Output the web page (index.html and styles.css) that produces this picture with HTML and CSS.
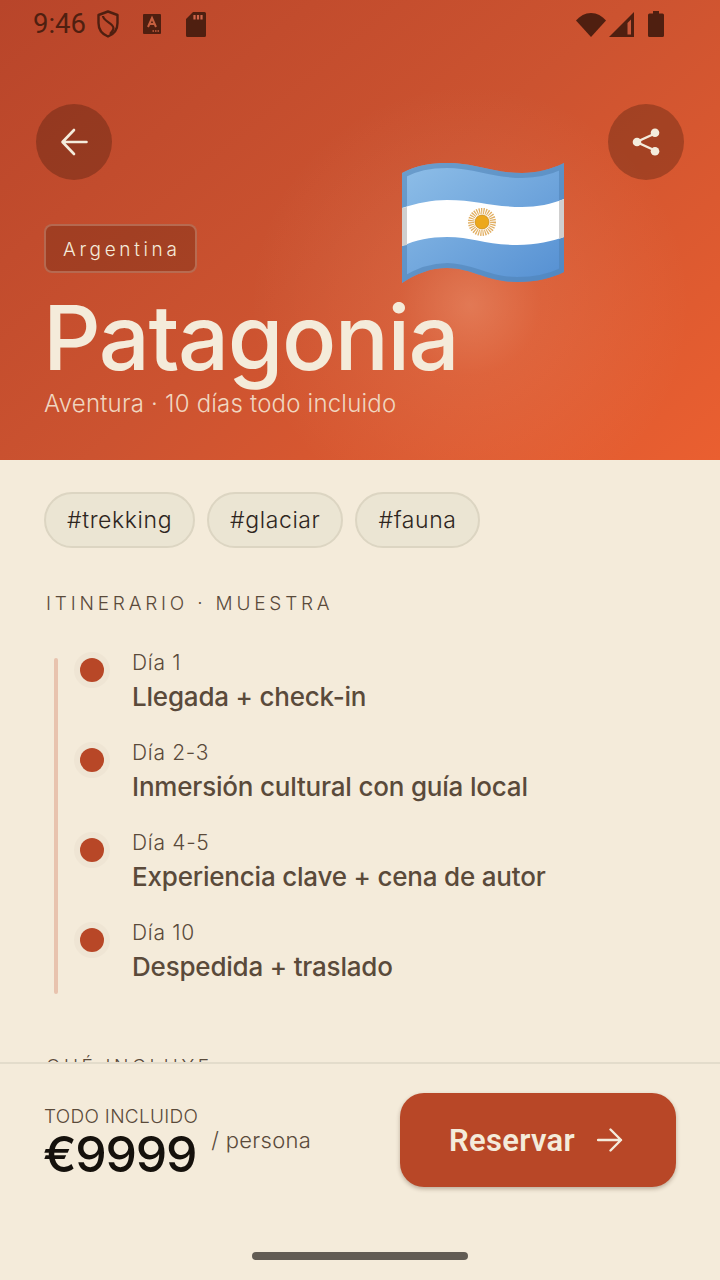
FILE: index.html
```html
<!DOCTYPE html>
<html lang="es">
<head>
    <meta charset="UTF-8">
    <meta name="viewport" content="width=device-width, initial-scale=1.0">
    <title>Patagonia</title>
    <link rel="stylesheet" href="styles.css">
</head>
<body>
    <div class="screen">
        <header class="hero">
            <!-- Barra de estado -->
            <div class="status-bar">
                <div class="status-left">
                    <span class="time">9:46</span>
                    <svg class="ic-shield" viewBox="0 0 22 28" width="22" height="28">
                        <path d="M11 1.500 20.500 5V13C20.500 20 16 24.500 11 26.500 6 24.500 1.500 20 1.500 13V5Z" fill="none" stroke="#4f1f10" stroke-width="2.400" stroke-linejoin="round"/>
                        <path d="M6 6C6 11 16 13 16.500 18 16.500 20 15 22 13 24" fill="none" stroke="#4f1f10" stroke-width="2.200"/>
                    </svg>
                    <svg class="ic-a" viewBox="0 0 18 20" width="18" height="20">
                        <rect width="18" height="20" rx="1" fill="#4f1f10"/>
                        <path d="M5 13 9 4 13 13M6.500 10H11.500" fill="none" stroke="#c65f3f" stroke-width="2"/>
                        <path d="M9.500 17H11M12 17H13.500M14.500 17H16" stroke="#c65f3f" stroke-width="1.600"/>
                    </svg>
                    <svg class="ic-sd" viewBox="0 0 20 25" width="20" height="25">
                        <path d="M7 0H18.500A1.500 1.500 0 0 1 20 1.500V23.500A1.500 1.500 0 0 1 18.500 25H1.500A1.500 1.500 0 0 1 0 23.500V7Z" fill="#4f1f10"/>
                        <path d="M8.500 3V7.500M12 3V7.500M15.500 3V7.500" stroke="#d0654a" stroke-width="2.200"/>
                    </svg>
                </div>
                <div class="status-right">
                    <svg viewBox="0 0 30 25" width="30" height="25">
                        <path d="M0 8.500C4 4 9 1 15 1S26 4 30 8.500L15 25Z" fill="#4f1f10"/>
                    </svg>
                    <svg class="ic-signal" viewBox="0 0 25 25" width="25" height="25">
                        <path d="M25 0V25H0Z" fill="#4f1f10"/>
                        <path d="M18.500 11V22.500H22V7.500Z" fill="#c9583a"/>
                    </svg>
                    <svg class="ic-battery" viewBox="0 0 16 26" width="16" height="26">
                        <path d="M5 0H11V2.500H14.500A1.500 1.500 0 0 1 16 4V24.500A1.500 1.500 0 0 1 14.500 26H1.500A1.500 1.500 0 0 1 0 24.500V4A1.500 1.500 0 0 1 1.500 2.500H5Z" fill="#4f1f10"/>
                    </svg>
                </div>
            </div>

            <nav class="hero-nav">
                <button class="round-btn btn-back">
                    <svg viewBox="0 0 28 28" width="28" height="28">
                        <path d="M26.500 14H3M14 2 2.500 14 14 26" fill="none" stroke="#f4ecdc" stroke-width="2.600" stroke-linecap="round" stroke-linejoin="round"/>
                    </svg>
                </button>
                <button class="round-btn btn-share">
                    <svg viewBox="0 0 30 30" width="30" height="30">
                        <path d="M24 6.500 5.500 15 24 23.500" fill="none" stroke="#f4ecdc" stroke-width="2.400"/>
                        <circle cx="24" cy="5.700" r="4.300" fill="#f4ecdc"/>
                        <circle cx="6" cy="15" r="4.300" fill="#f4ecdc"/>
                        <circle cx="24" cy="24.300" r="4.300" fill="#f4ecdc"/>
                    </svg>
                </button>
            </nav>

            <svg class="flag" viewBox="0 0 162 122" width="162" height="122">
                <defs>
                    <linearGradient id="flagBlue" x1="0" y1="0" x2="1" y2="1">
                        <stop offset="0" stop-color="#8fbfe8"/>
                        <stop offset="1" stop-color="#548fd2"/>
                    </linearGradient>
                    <clipPath id="flagShape">
                        <path d="M0 11C15 3 30 1 45 1 75 1 90 11 120 11 135 11 150 7 162 1V110C150 116 135 120 115 120 85 120 70 106 45 106 28 106 14 112 0 121Z"/>
                    </clipPath>
                </defs>
                <g clip-path="url(#flagShape)">
                    <rect width="162" height="122" fill="url(#flagBlue)"/>
                    <path d="M0 11C15 3 30 1 45 1 75 1 90 11 120 11 135 11 150 7 162 1V110C150 116 135 120 115 120 85 120 70 106 45 106 28 106 14 112 0 121Z" fill="none" stroke="#4f82b4" stroke-opacity=".55" stroke-width="10"/>
                    <path d="M0 46C15 41 30 38 45 38 75 38 90 45 120 45 135 45 150 42 162 37V75C150 79 135 83 115 83 85 83 70 75 45 75 28 75 14 78 0 84Z" fill="#fff"/>
                    <path d="M0 46 5 45V83L0 84ZM157 39 162 37V75L157 77Z" fill="#cfcfcf"/>
                </g>
                <circle cx="80" cy="60" r="11" fill="none" stroke="#d99a3a" stroke-opacity=".8" stroke-width="6" stroke-dasharray="1.200 1"/>
                <circle cx="80" cy="60" r="7" fill="#eca81c" stroke="#c98a18" stroke-width=".8"/>
            </svg>

            <div class="hero-text">
                <span class="country">Argentina</span>
                <h1>Patagonia</h1>
                <p class="hero-sub">Aventura · 10 días todo incluido</p>
            </div>
        </header>

        <main class="content">
            <div class="tags">
                <span class="tag">#trekking</span>
                <span class="tag">#glaciar</span>
                <span class="tag">#fauna</span>
            </div>

            <h2 class="section-title">ITINERARIO · MUESTRA</h2>

            <ul class="timeline">
                <li class="stop">
                    <span class="dot"></span>
                    <div>
                        <div class="stop-day">Día 1</div>
                        <div class="stop-name">Llegada + check-in</div>
                    </div>
                </li>
                <li class="stop">
                    <span class="dot"></span>
                    <div>
                        <div class="stop-day">Día 2-3</div>
                        <div class="stop-name">Inmersión cultural con guía local</div>
                    </div>
                </li>
                <li class="stop">
                    <span class="dot"></span>
                    <div>
                        <div class="stop-day">Día 4-5</div>
                        <div class="stop-name">Experiencia clave + cena de autor</div>
                    </div>
                </li>
                <li class="stop">
                    <span class="dot"></span>
                    <div>
                        <div class="stop-day">Día 10</div>
                        <div class="stop-name">Despedida + traslado</div>
                    </div>
                </li>
            </ul>

            <h2 class="section-title next-title">QUÉ INCLUYE</h2>
        </main>

        <footer class="bottom-bar">
            <div class="price-row">
                <div class="price-box">
                    <div class="price-label">TODO INCLUIDO</div>
                    <div class="price">€9999</div>
                </div>
                <span class="per">/ persona</span>
                <button class="book-btn">
                    Reservar
                    <svg viewBox="0 0 26 26" width="26" height="26">
                        <path d="M1 13H24M13.500 2.500 24 13 13.500 23.500" fill="none" stroke="#f4ecdc" stroke-width="2.400" stroke-linecap="round" stroke-linejoin="round"/>
                    </svg>
                </button>
            </div>
            <div class="handle"></div>
        </footer>
    </div>
</body>
</html>
```

FILE: styles.css
```css
html {
    box-sizing: border-box;
}
*, *:before, *:after {
    box-sizing: inherit;
}
body {
    margin: 0;
    font-family: 'Inter', 'Liberation Sans', sans-serif;
    background-color: #F4EBDA;
    color: #5A4A3A;
}

.screen {
    width: 720px;
    height: 1280px;
    display: flex;
    flex-direction: column;
    overflow: hidden;
}

/* Cabecera */
.hero {
    position: relative;
    height: 460px;
    flex: none;
    background-image:
        radial-gradient(circle at 470px 305px, rgba(255, 200, 170, 0.3) 0, rgba(255, 200, 170, 0.1) 70px, transparent 220px),
        linear-gradient(140deg, #B8452A 0%, #CC5330 50%, #EA5F30 100%);
}

.status-bar {
    height: 48px;
    padding: 10px 56px 0 33px;
    display: flex;
    justify-content: space-between;
    align-items: flex-start;
}
.status-left, .status-right {
    display: flex;
    align-items: center;
}
.status-right {
    padding-top: 1px;
}
.time {
    font-family: 'Roboto', sans-serif;
    font-size: 27.500px;
    line-height: 28px;
    color: #4F1F10;
}
.ic-shield {
    margin-left: 11px;
}
.ic-a {
    margin-left: 24px;
}
.ic-sd {
    margin-left: 25px;
}
.ic-signal {
    margin-left: 3px;
}
.ic-battery {
    margin-left: 14px;
}

.hero-nav {
    display: flex;
    justify-content: space-between;
    padding: 56px 36px 0;
}
.round-btn {
    width: 76px;
    height: 76px;
    border: none;
    border-radius: 50%;
    padding: 0;
    display: flex;
    align-items: center;
    justify-content: center;
    background-color: rgba(40, 15, 5, 0.28);
}

.flag {
    position: absolute;
    left: 402px;
    top: 162px;
}

.hero-text {
    padding: 44px 44px 0;
}
.country {
    display: inline-block;
    height: 49px;
    line-height: 47px;
    padding: 0 14px 0 17px;
    font-size: 19px;
    letter-spacing: 3.650px;
    font-weight: 300;
    color: #F4EBDA;
    background-color: rgba(60, 20, 5, 0.25);
    border: 2px solid rgba(244, 235, 218, 0.25);
    border-radius: 8px;
}
h1 {
    margin: 11px 0 0 -1px;
    font-size: 90px;
    line-height: 108px;
    font-weight: 500;
    letter-spacing: -1.500px;
    color: #F4EBDA;
}
.hero-sub {
    margin: -3px 0 0;
    font-size: 24px;
    line-height: 30px;
    font-weight: 300;
    letter-spacing: 0.200px;
    color: #F0D6C0;
}

/* Contenido */
.content {
    flex: 1;
    min-height: 0;
    overflow: hidden;
    padding: 32px 44px 0;
}
.tags {
    display: flex;
    gap: 12px;
}
.tag {
    height: 56px;
    line-height: 52px;
    padding: 0 21px;
    font-size: 23px;
    font-weight: 300;
    letter-spacing: 0.600px;
    color: #2E261E;
    background-color: #EBE5D3;
    border: 2px solid #DCD5C2;
    border-radius: 28px;
}
.section-title {
    margin: 44px 0 0 2px;
    font-size: 19px;
    line-height: 24px;
    font-weight: 300;
    letter-spacing: 3.800px;
    color: #5A4A3A;
}
.next-title {
    margin-top: 61px;
    letter-spacing: 3.600px;
}

.timeline {
    list-style: none;
    margin: 18px 0 0;
    padding: 0 0 0 24px;
    position: relative;
}
.timeline:before {
    content: '';
    position: absolute;
    left: 10px;
    top: 24px;
    bottom: 0;
    width: 4px;
    border-radius: 2px;
    background-color: #E8C3AE;
}
.stop {
    display: flex;
    gap: 28px;
    height: 90px;
    padding-top: 13px;
}
.dot {
    flex: none;
    width: 24px;
    height: 24px;
    margin: 11px 0 0 12px;
    border-radius: 50%;
    background-color: #B84727;
    box-shadow: 0 0 0 6px #EFE5D4;
}
.stop-day {
    margin-top: 1px;
    font-size: 21px;
    line-height: 29px;
    font-weight: 300;
    letter-spacing: 0.700px;
    color: #5A4A3A;
}
.stop-name {
    font-size: 26px;
    line-height: 40px;
    font-weight: 500;
    letter-spacing: -0.200px;
    color: #5A4A3A;
}

/* Barra inferior */
.bottom-bar {
    flex: none;
    height: 218px;
    background-color: #F4EBDA;
    border-top: 2px solid #E3DCCB;
    padding: 29px 44px 0;
    position: relative;
}
.price-row {
    display: flex;
    align-items: flex-start;
}
.price-box {
    padding-top: 12px;
}
.price-label {
    font-size: 19px;
    line-height: 23px;
    font-weight: 300;
    letter-spacing: 0.300px;
    color: #5A4A3A;
}
.price {
    margin: 1px 0 0 -1px;
    font-size: 50px;
    line-height: 50px;
    font-weight: 500;
    letter-spacing: -1.300px;
    color: #15110C;
}
.per {
    margin: 34px 0 0 13px;
    font-size: 22px;
    line-height: 26px;
    font-weight: 300;
    letter-spacing: 0.300px;
    color: #5A4A3A;
}
.book-btn {
    margin-left: auto;
    width: 276px;
    height: 94px;
    border: none;
    border-radius: 24px;
    padding: 0 4px 0 0;
    display: flex;
    align-items: center;
    justify-content: center;
    gap: 22px;
    font-family: 'Roboto', sans-serif;
    font-size: 31px;
    font-weight: 600;
    letter-spacing: 0.300px;
    color: #F4EBDA;
    background-color: #B84727;
    box-shadow: 0 2px 4px rgba(60, 30, 10, 0.3);
}
.handle {
    position: absolute;
    left: 252px;
    bottom: 20px;
    width: 216px;
    height: 8px;
    border-radius: 4px;
    background-color: #625C54;
}
```
